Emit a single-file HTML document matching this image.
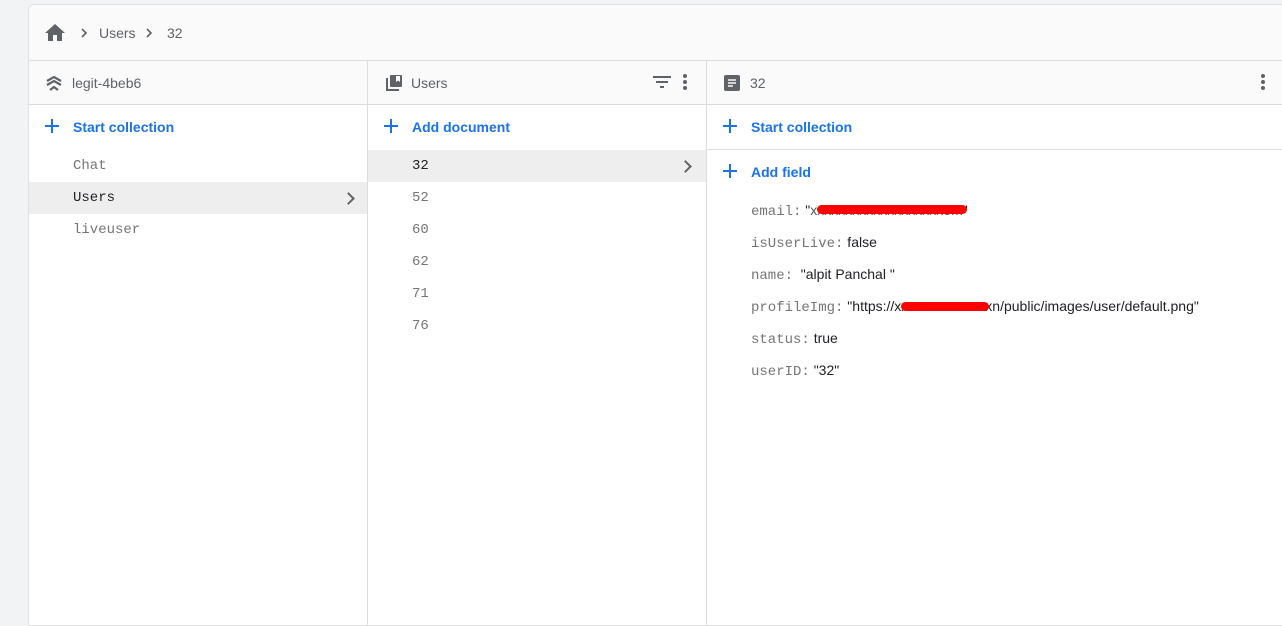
<!DOCTYPE html>
<html><head><style>
body{margin:0;width:1282px;height:583px;background:#f1f3f4;font-family:"Liberation Sans",sans-serif;overflow:hidden;position:relative}
.card{position:absolute;left:28px;top:4px;width:1270px;height:620px;background:#fff;border:1px solid #e0e0e0;border-radius:6px 0 0 0}
.bc{position:absolute;left:0;top:0;right:0;height:55px;background:#fafafa;border-bottom:1px solid #dadce0;border-radius:6px 0 0 0}
.col{position:absolute;top:56px;bottom:0;border-right:1px solid #dadce0}
.hd{height:43px;background:#fafafa;border-bottom:1px solid #dadce0;position:relative;color:#5f6368;font-size:14px}
.hd span{position:absolute;left:43px;top:14px}
.act{height:45px;position:relative;color:#1a73e8;font-size:14px;font-weight:bold}
.act span{position:absolute;left:44px;top:14px}
.plus{position:absolute;left:16px;top:14px;width:14px;height:14px}
.plus:before,.plus:after{content:"";position:absolute;background:#1a73e8}
.plus:before{left:6px;top:0;width:2px;height:14px}
.plus:after{left:0;top:6px;width:14px;height:2px}
.row{height:32px;line-height:32px;padding-left:44px;font-family:"Liberation Mono",monospace;font-size:14px;color:#757575;position:relative}
.row.sel{background:#eeeeee;color:#202124}
.chev{position:absolute;right:14px;top:12px;width:7px;height:7px;border-right:2px solid #5f6368;border-top:2px solid #5f6368;transform:rotate(45deg)}
.f{position:absolute;left:44px;font-size:14px;color:#202124;white-space:pre}
.f b{font-weight:normal;font-family:"Liberation Mono",monospace;color:#757575}
.red{position:absolute;background:#f00;border-radius:6px;height:9px}
</style></head><body>
<div class="card">
<div class="bc">
<svg style="position:absolute;left:16px;top:19px" width="20" height="17" viewBox="0 0 20 17"><path d="M8 17v-6h4v6h5V9h3L10 0 0 9h3v8z" fill="#5f6368"/></svg>
<svg style="position:absolute;left:52px;top:23px" width="8" height="10"><path d="M1 1l4 4-4 4" stroke="#5f6368" stroke-width="1.6" fill="none"/></svg>
<span style="position:absolute;left:70px;top:20px;font-size:14px;color:#5f6368">Users</span>
<svg style="position:absolute;left:117px;top:23px" width="8" height="10"><path d="M1 1l4 4-4 4" stroke="#5f6368" stroke-width="1.6" fill="none"/></svg>
<span style="position:absolute;left:138px;top:20px;font-size:14px;color:#5f6368">32</span>
</div>
<div class="col" style="left:0;width:338px">
<div class="hd"><svg style="position:absolute;left:17px;top:14px" width="16" height="16" viewBox="0 0 16 16"><path d="M1 6l7-4 7 4M1 10l7-4 7 4M4 15l4-3 4 3" stroke="#5f6368" stroke-width="2.2" fill="none"/></svg><span>legit-4beb6</span></div>
<div class="act"><i class="plus"></i><span>Start collection</span></div>
<div class="row">Chat</div>
<div class="row sel">Users<i class="chev"></i></div>
<div class="row">liveuser</div>
</div>
<div class="col" style="left:339px;width:338px">
<div class="hd"><svg style="position:absolute;left:17px;top:13px" width="18" height="18" viewBox="0 0 18 18"><path d="M1 4v13h13v-2H3V4z" fill="#5f6368"/><rect x="5" y="1" width="12" height="12" rx="1" fill="#5f6368"/><path d="M11 2h4v6l-2-1.5L11 8z" fill="#fafafa"/></svg><span>Users</span>
<svg style="position:absolute;left:285px;top:15px" width="18" height="12"><path d="M0 1h18M3 6h12M7 11h4" stroke="#5f6368" stroke-width="2"/></svg>
<svg style="position:absolute;left:315px;top:12px" width="4" height="18"><circle cx="2" cy="3" r="2" fill="#5f6368"/><circle cx="2" cy="9" r="2" fill="#5f6368"/><circle cx="2" cy="15" r="2" fill="#5f6368"/></svg></div>
<div class="act"><i class="plus"></i><span>Add document</span></div>
<div class="row sel">32<i class="chev" style="right:16px"></i></div>
<div class="row">52</div><div class="row">60</div><div class="row">62</div><div class="row">71</div><div class="row">76</div>
</div>
<div class="col" style="left:678px;width:600px;border-right:none">
<div class="hd"><svg style="position:absolute;left:17px;top:14px" width="16" height="16" viewBox="0 0 16 16"><rect width="16" height="16" rx="2" fill="#5f6368"/><path d="M4 5h8M4 8h8M4 11h5" stroke="#fafafa" stroke-width="1.6"/></svg><span>32</span>
<svg style="position:absolute;left:554px;top:12px" width="4" height="18"><circle cx="2" cy="3" r="2" fill="#5f6368"/><circle cx="2" cy="9" r="2" fill="#5f6368"/><circle cx="2" cy="15" r="2" fill="#5f6368"/></svg></div>
<div class="act" style="border-bottom:1px solid #dadce0;height:44px"><i class="plus"></i><span>Start collection</span></div>
<div class="act"><i class="plus"></i><span>Add field</span></div>
<div style="position:relative">
<div class="f" style="top:7px"><b>email:</b> "<span style="color:#555">xxxxxxxxxxxxxxxxxxxom</span>"<i class="red" style="left:66px;top:3px;width:150px"></i></div>
<div class="f" style="top:39px"><b>isUserLive:</b> false</div>
<div class="f" style="top:71px"><b>name:</b>  "alpit Panchal "</div>
<div class="f" style="top:103px"><b>profileImg:</b> "https://xxxxxxxxxxxxxxn/public/images/user/default.png"<i class="red" style="left:150px;top:4px;width:88px"></i></div>
<div class="f" style="top:135px"><b>status:</b> true</div>
<div class="f" style="top:167px"><b>userID:</b> "32"</div>
</div>
</div>
</div>
</body></html>
